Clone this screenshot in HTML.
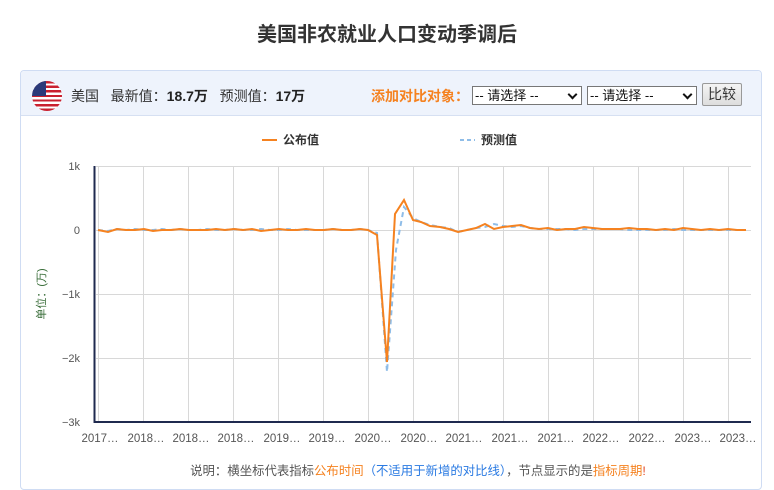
<!DOCTYPE html>
<html><head><meta charset="utf-8"><style>
*{margin:0;padding:0;box-sizing:border-box}
body{width:774px;height:481px;background:#fff;font-family:"Liberation Sans","Noto Sans CJK SC",sans-serif;position:relative;overflow:hidden;color:#333}
.title{position:absolute;top:18px;left:0;width:774px;text-align:center;font-size:20px;font-weight:bold;color:#333}
.box{position:absolute;left:20px;top:70px;width:742px;height:420px;border:1px solid #cfdcf3;border-radius:4px}
.hdr{position:absolute;left:0;top:0;width:740px;height:45px;background:#eef3fc;border-bottom:1px solid #d6e0f2;border-radius:4px 4px 0 0}
.flag{position:absolute;left:11px;top:10px;width:30px;height:30px;border-radius:50%;overflow:hidden;background:repeating-linear-gradient(#c9202f 0 2.3px,#fff 2.3px 4.6px)}
.flag i{position:absolute;left:0;top:0;width:14px;height:15px;background:#2b3a7a}
.t{position:absolute;top:15px;font-size:14px;color:#333}
.t b{color:#222}
.add{position:absolute;left:350px;top:15px;font-size:14px;color:#f58220;font-weight:bold}
.sel{position:absolute;top:15px;width:110px;height:19px;border:1px solid #777;background:#fff;font-size:13px;padding-left:2px;line-height:17px;color:#111}
.sel:after{content:"";position:absolute;right:5px;top:4px;width:5px;height:5px;border-right:2px solid #111;border-bottom:2px solid #111;transform:rotate(45deg)}
.btn{position:absolute;left:681px;top:12px;width:40px;height:23px;border:1px solid #999;background:linear-gradient(#f4f4f4,#ddd);font-size:14px;text-align:center;line-height:21px;border-radius:2px}
</style></head><body>
<div class="title">美国非农就业人口变动季调后</div>
<div class="box">
<div class="hdr">
<div class="flag"><i></i></div>
<div class="t" style="left:50px">美国&nbsp;&nbsp; 最新值：<b>18.7万</b>&nbsp;&nbsp; 预测值：<b>17万</b></div>
<div class="add">添加对比对象：</div>
<div class="sel" style="left:451px">-- 请选择 --</div>
<div class="sel" style="left:566px">-- 请选择 --</div>
<div class="btn">比较</div>
</div>
</div>
<svg width="774" height="481" style="position:absolute;left:0;top:0" font-family="Liberation Sans,Noto Sans CJK SC,sans-serif">
<line x1="262" y1="140" x2="277" y2="140" stroke="#f58220" stroke-width="2"/>
<text x="283" y="144" font-size="12" fill="#333" font-weight="bold">公布值</text>
<line x1="460" y1="140" x2="475" y2="140" stroke="#8fbde8" stroke-width="2" stroke-dasharray="4,3"/>
<text x="481" y="144" font-size="12" fill="#333" font-weight="bold">预测值</text>
<g stroke="#d8d8d8" stroke-width="1">
<line x1="96" y1="166.5" x2="751" y2="166.5"/><line x1="96" y1="230.5" x2="751" y2="230.5"/><line x1="96" y1="294.5" x2="751" y2="294.5"/><line x1="96" y1="358.5" x2="751" y2="358.5"/>
<line x1="98.5" y1="166" x2="98.5" y2="422"/><line x1="143.5" y1="166" x2="143.5" y2="422"/><line x1="188.5" y1="166" x2="188.5" y2="422"/><line x1="233.5" y1="166" x2="233.5" y2="422"/><line x1="278.5" y1="166" x2="278.5" y2="422"/><line x1="323.5" y1="166" x2="323.5" y2="422"/><line x1="368.5" y1="166" x2="368.5" y2="422"/><line x1="413.5" y1="166" x2="413.5" y2="422"/><line x1="458.5" y1="166" x2="458.5" y2="422"/><line x1="503.5" y1="166" x2="503.5" y2="422"/><line x1="548.5" y1="166" x2="548.5" y2="422"/><line x1="593.5" y1="166" x2="593.5" y2="422"/><line x1="638.5" y1="166" x2="638.5" y2="422"/><line x1="683.5" y1="166" x2="683.5" y2="422"/><line x1="728.5" y1="166" x2="728.5" y2="422"/>
</g>
<line x1="94.5" y1="166" x2="94.5" y2="423" stroke="#1f2a4f" stroke-width="2"/>
<line x1="94" y1="422" x2="751" y2="422" stroke="#1f2a4f" stroke-width="2"/>
<g font-size="11" fill="#555" text-anchor="end">
<text x="80" y="170">1k</text><text x="80" y="234">0</text><text x="80" y="298">−1k</text><text x="80" y="362">−2k</text><text x="80" y="426">−3k</text>
</g>
<text x="45" y="294" font-size="11" fill="#3a6e3a" transform="rotate(-90 45 294)" text-anchor="middle">单位：(万)</text>
<g font-size="11.5" fill="#555" text-anchor="middle">
<text x="100" y="442">2017…</text><text x="146" y="442">2018…</text><text x="191" y="442">2018…</text><text x="236" y="442">2018…</text><text x="282" y="442">2019…</text><text x="327" y="442">2019…</text><text x="373" y="442">2020…</text><text x="419" y="442">2020…</text><text x="464" y="442">2021…</text><text x="510" y="442">2021…</text><text x="556" y="442">2021…</text><text x="601" y="442">2022…</text><text x="647" y="442">2022…</text><text x="693" y="442">2023…</text><text x="738" y="442">2023…</text>
</g>
<polyline fill="none" stroke="#8fbde8" stroke-width="2" stroke-dasharray="5,4" points="98,230 108,231 117,229 126,230 135,229 144,230 153,230 162,229 171,230 180,229 189,230 198,230 207,229 216,230 225,230 234,229 243,230 252,230 261,229 270,230 279,230 288,229 297,230 306,230 315,230 324,230 333,229 342,230 351,230 360,229 368,230 377,233 387,372 396,250 404,207 413,218 421,222 430,225 440,227 449,228 458,232 467,230 476,228 485,227 494,224 503,226 512,227 521,226 530,228 539,229 548,229 557,229 566,229 575,230 584,229 593,229 602,229 611,229 620,229 629,230 638,230 647,230 656,230 665,230 674,229 683,230 692,230 701,230 710,230 719,230 728,230 737,230 746,230"/>
<polyline fill="none" stroke="#f58220" stroke-width="2" points="98,230 108,232 117,229 126,230 135,230 144,229 153,231 162,230 171,230 180,229 189,230 198,230 207,230 216,229 225,230 234,229 243,230 252,229 261,231 270,230 279,229 288,230 297,230 306,229 315,230 324,230 333,229 342,230 351,230 360,229 368,230 377,235 387,362 395,214 404,200 413,220 421,222 430,226 440,227 449,229 458,232 467,230 476,228 485,224 494,229 503,227 512,226 521,225 530,228 539,229 548,228 557,230 566,229 575,229 584,227 593,228 602,229 611,229 620,229 629,228 638,229 647,229 656,230 665,229 674,230 683,228 692,229 701,230 710,229 719,230 728,229 737,230 746,230"/>
<text x="418" y="475" font-size="12.4" text-anchor="middle" fill="#555">说明：横坐标代表指标<tspan fill="#f58220">公布时间</tspan><tspan fill="#2a7ae2">（不适用于新增的对比线）</tspan>，节点显示的是<tspan fill="#f58220">指标周期</tspan><tspan fill="#e04a2a">!</tspan></text>
</svg>
</body></html>
